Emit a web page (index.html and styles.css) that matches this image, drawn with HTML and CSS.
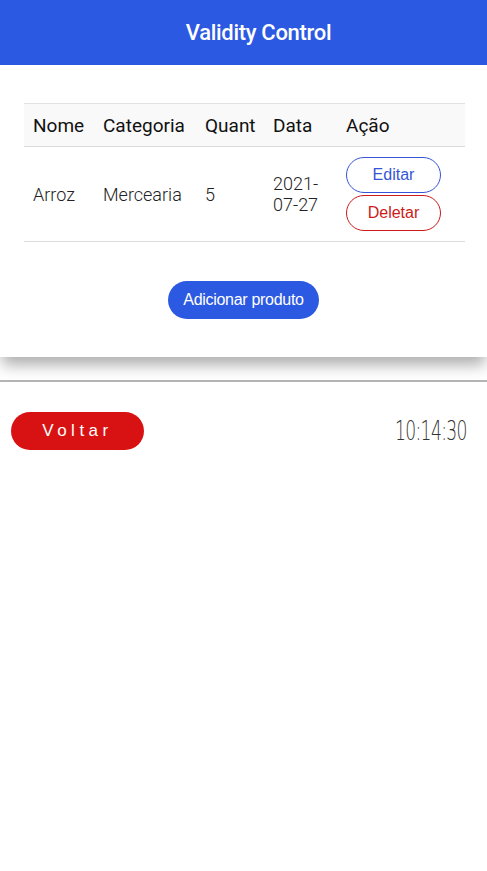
FILE: index.html
```html
<!DOCTYPE html>
<html lang="pt">
<head>
<meta charset="utf-8">
<title>Validity Control</title>
<link rel="stylesheet" href="styles.css">
</head>
<body>
<header class="topbar">
  <h1 class="title">Validity Control</h1>
</header>
<main class="card">
  <table class="products">
    <thead>
      <tr>
        <th class="c-nome">Nome</th>
        <th class="c-cat">Categoria</th>
        <th class="c-qt">Quant</th>
        <th class="c-data">Data</th>
        <th class="c-acao">Ação</th>
      </tr>
    </thead>
    <tbody>
      <tr>
        <td>Arroz</td>
        <td>Mercearia</td>
        <td>5</td>
        <td>2021-<br>07-27</td>
        <td>
          <div class="actions">
            <button class="btn-outline edit">Editar</button>
            <button class="btn-outline del">Deletar</button>
          </div>
        </td>
      </tr>
    </tbody>
  </table>
  <div class="add-wrap">
    <button class="btn-add">Adicionar produto</button>
  </div>
</main>
<hr class="divider">
<footer class="bottom">
  <button class="btn-back">Voltar</button>
  <span class="clock">10:14:30</span>
</footer>
</body>
</html>
```

FILE: styles.css
```css
* { box-sizing: border-box; }
html, body { margin: 0; padding: 0; background: #fff; }
body { font-family: Roboto, "Liberation Sans", sans-serif; color: #111; }

.topbar {
  height: 65px;
  background: #2c59e2;
  display: flex;
  align-items: center;
  justify-content: center;
  padding-left: 30px;
}
.title {
  margin: 0;
  color: #fff;
  font-size: 22px;
  font-weight: 500;
  letter-spacing: -0.3px;
}

.card {
  background: #fff;
  padding: 38px 22px 38px 24px;
  box-shadow: 0 10px 14px -2px rgba(0,0,0,0.32);
  position: relative;
}
.products {
  width: 100%;
  border-collapse: collapse;
}
.products th {
  background: #f9f9f9;
  border-top: 1px solid #e2e2e2;
  border-bottom: 1px solid #dcdcdc;
  height: 43px;
  text-align: left;
  font-weight: 400;
  font-size: 19px;
  padding: 0 0 0 9px;
  color: #111;
}
.products td {
  height: 95px;
  padding: 0 0 0 9px;
  font-size: 18px;
  font-weight: 300;
  color: #222;
  border-bottom: 1px solid #dcdcdc;
  vertical-align: middle;
  line-height: 21px;
}
.c-nome { width: 70px; }
.c-cat { width: 102px; }
.c-qt { width: 68px; }
.c-data { width: 73px; }

.actions { display: flex; flex-direction: column; gap: 2px; align-items: flex-start; }
.btn-outline {
  width: 95px;
  height: 36px;
  border-radius: 18px;
  background: #fff;
  font-family: "Liberation Sans", Arial, sans-serif;
  font-size: 16px;
  font-weight: 400;
}
.edit { border: 1px solid #3655d6; color: #3655d6; }
.del { border: 1px solid #cc1a1a; color: #cc1a1a; }

.add-wrap { display: flex; justify-content: center; padding-top: 39px; padding-right: 2px; }
.btn-add {
  height: 38px;
  padding: 0 15px;
  white-space: nowrap;
  border: none;
  border-radius: 19px;
  background: #2c59e2;
  color: #fff;
  font-family: "Liberation Sans", Arial, sans-serif;
  font-size: 16px;
  letter-spacing: -0.3px;
}

.divider {
  margin: 23px 0 0;
  border: none;
  border-top: 2px solid #b4b4b4;
  height: 0;
}

.bottom {
  display: flex;
  justify-content: space-between;
  align-items: center;
  padding: 30px 20px 0 11px;
}
.btn-back {
  width: 133px;
  height: 38px;
  border: none;
  border-radius: 19px;
  background: #d81212;
  color: #fff;
  font-family: "Liberation Sans", Arial, sans-serif;
  font-size: 17px;
  letter-spacing: 4.5px;
}
.clock {
  display: inline-block;
  font-family: "DejaVu Sans", sans-serif;
  font-weight: 200;
  font-size: 26px;
  color: #333;
  transform: scaleX(0.66);
  transform-origin: right center;
  letter-spacing: -1px;
}
```
